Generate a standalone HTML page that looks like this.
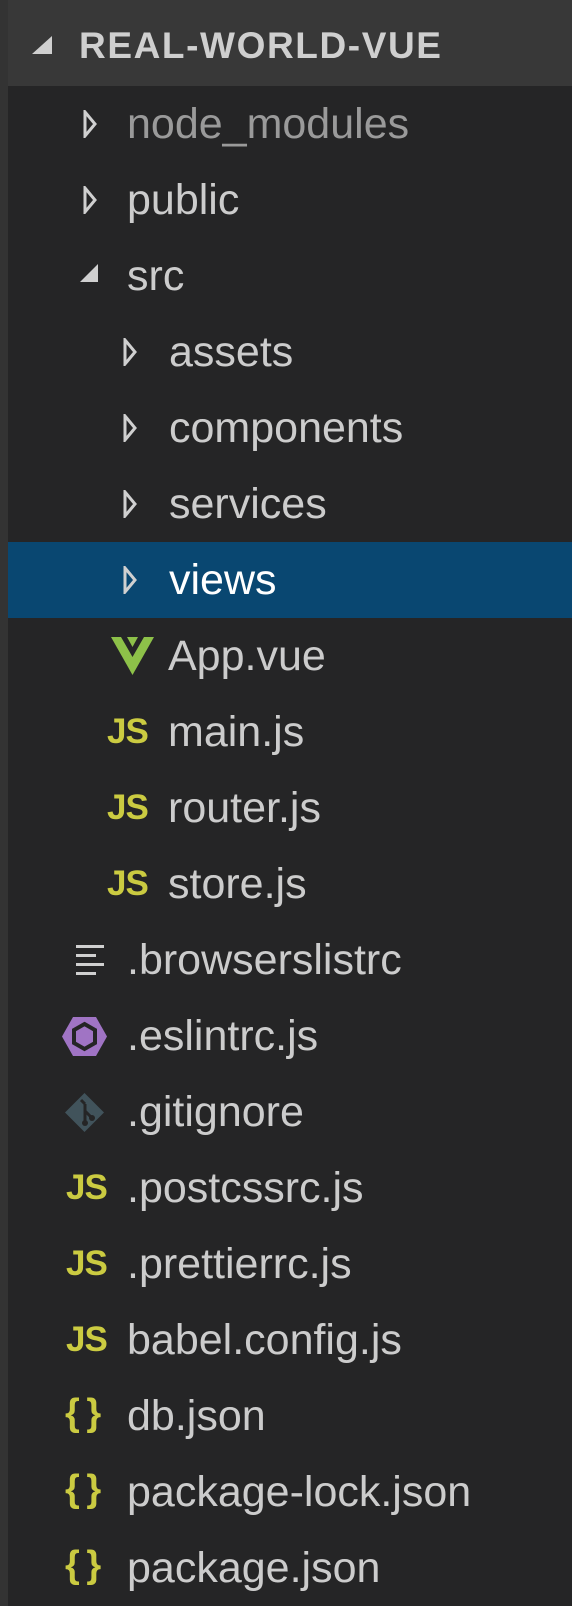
<!DOCTYPE html>
<html><head><meta charset="utf-8"><style>
html,body{margin:0;padding:0}
body{width:572px;height:1606px;background:#252526;position:relative;overflow:hidden;font-family:"Liberation Sans",Arial,sans-serif}
.strip{position:absolute;left:0;top:0;width:8px;height:1606px;background:#333333}
.hdr{position:absolute;left:0;top:0;width:572px;height:86px;background:#383838}
.hdr .t{position:absolute;left:79px;top:0;line-height:92px;font-size:37px;font-weight:bold;color:#cfcfcf;letter-spacing:1.6px}
.row{position:absolute;left:8px;width:564px;height:76px}
.row .t{position:absolute;top:0;line-height:76px;font-size:43px;color:#cccccc;white-space:nowrap}
.sel{background:#094771}
.sel .t{color:#ffffff}
.ic{position:absolute}
.js{position:absolute;font-weight:bold;font-size:35px;color:#cbcb41;line-height:76px;top:0;letter-spacing:-1px}
.br{position:absolute;font-weight:bold;font-size:38px;color:#cbcb41;line-height:76px;top:-3px;letter-spacing:-2px;white-space:pre}
</style></head><body>
<div class="hdr">
<svg class="ic" style="left:32px;top:36px" width="20" height="18"><polygon points="20,0 20,18 0,18" fill="#cfcfcf"/></svg>
<div class="t">REAL-WORLD-VUE</div>
</div>
<div class="strip"></div>

<div class="row" style="top:86px">
<svg class="ic" style="left:75px;top:24px" width="14" height="28"><polygon points="2,2 12,14 2,26" fill="none" stroke="#d0d0d0" stroke-width="3"/></svg>
<div class="t" style="left:119px;color:#9a9a9a">node_modules</div></div>
<div class="row" style="top:162px">
<svg class="ic" style="left:75px;top:24px" width="14" height="28"><polygon points="2,2 12,14 2,26" fill="none" stroke="#d0d0d0" stroke-width="3"/></svg>
<div class="t" style="left:119px">public</div></div>
<div class="row" style="top:238px">
<svg class="ic" style="left:72px;top:26px" width="20" height="20"><polygon points="18,0 18,18 0,18" fill="#d0d0d0"/></svg>
<div class="t" style="left:119px">src</div></div>
<div class="row" style="top:314px">
<svg class="ic" style="left:115px;top:24px" width="14" height="28"><polygon points="2,2 12,14 2,26" fill="none" stroke="#d0d0d0" stroke-width="3"/></svg>
<div class="t" style="left:161px">assets</div></div>
<div class="row" style="top:390px">
<svg class="ic" style="left:115px;top:24px" width="14" height="28"><polygon points="2,2 12,14 2,26" fill="none" stroke="#d0d0d0" stroke-width="3"/></svg>
<div class="t" style="left:161px">components</div></div>
<div class="row" style="top:466px">
<svg class="ic" style="left:115px;top:24px" width="14" height="28"><polygon points="2,2 12,14 2,26" fill="none" stroke="#d0d0d0" stroke-width="3"/></svg>
<div class="t" style="left:161px">services</div></div>
<div class="row sel" style="top:542px">
<svg class="ic" style="left:115px;top:24px" width="14" height="28"><polygon points="2,2 12,14 2,26" fill="none" stroke="#d0d0d0" stroke-width="3"/></svg>
<div class="t" style="left:161px">views</div></div>
<div class="row" style="top:618px">
<svg class="ic" style="left:103px;top:19px" width="43" height="38" viewBox="0 0 43 38"><polygon points="0,0 43,0 21.5,38" fill="#8dc149"/><polygon points="10,0 21.5,20 33,0 27,0 21.5,10 16,0" fill="#252526"/></svg>
<div class="t" style="left:160px">App.vue</div></div>
<div class="row" style="top:694px"><div class="js" style="left:99px">JS</div><div class="t" style="left:160px">main.js</div></div>
<div class="row" style="top:770px"><div class="js" style="left:99px">JS</div><div class="t" style="left:160px">router.js</div></div>
<div class="row" style="top:846px"><div class="js" style="left:99px">JS</div><div class="t" style="left:160px">store.js</div></div>
<div class="row" style="top:922px">
<svg class="ic" style="left:68px;top:23px" width="30" height="31"><rect x="0" y="0" width="28" height="3" fill="#d0d0d0"/><rect x="0" y="9" width="20" height="3" fill="#d0d0d0"/><rect x="0" y="18" width="28" height="3" fill="#d0d0d0"/><rect x="0" y="27" width="20" height="3" fill="#d0d0d0"/></svg>
<div class="t" style="left:119px">.browserslistrc</div></div>
<div class="row" style="top:998px">
<svg class="ic" style="left:54px;top:19px" width="45" height="39" viewBox="0 0 45 39"><polygon points="11,0 34,0 45,19.5 34,39 11,39 0,19.5" fill="#a074c4"/><polygon points="22.5,7 33,13 33,26 22.5,32 12,26 12,13" fill="none" stroke="#252526" stroke-width="4"/></svg>
<div class="t" style="left:119px">.eslintrc.js</div></div>
<div class="row" style="top:1074px">
<svg class="ic" style="left:57px;top:19px" width="39" height="39" viewBox="0 0 39 39"><polygon points="19.5,0 39,19.5 19.5,39 0,19.5" fill="#41535b"/><path d="M16 7 L20 11 M20 11 L20 30 M20 18 L27 25" stroke="#252526" stroke-width="3" fill="none"/><circle cx="20" cy="30" r="3" fill="#252526"/><circle cx="27" cy="25" r="3" fill="#252526"/></svg>
<div class="t" style="left:119px">.gitignore</div></div>
<div class="row" style="top:1150px"><div class="js" style="left:58px">JS</div><div class="t" style="left:119px">.postcssrc.js</div></div>
<div class="row" style="top:1226px"><div class="js" style="left:58px">JS</div><div class="t" style="left:119px">.prettierrc.js</div></div>
<div class="row" style="top:1302px"><div class="js" style="left:58px">JS</div><div class="t" style="left:119px">babel.config.js</div></div>
<div class="row" style="top:1378px"><div class="br" style="left:57px">{ }</div><div class="t" style="left:119px">db.json</div></div>
<div class="row" style="top:1454px"><div class="br" style="left:57px">{ }</div><div class="t" style="left:119px">package-lock.json</div></div>
<div class="row" style="top:1530px"><div class="br" style="left:57px">{ }</div><div class="t" style="left:119px">package.json</div></div>
</body></html>
